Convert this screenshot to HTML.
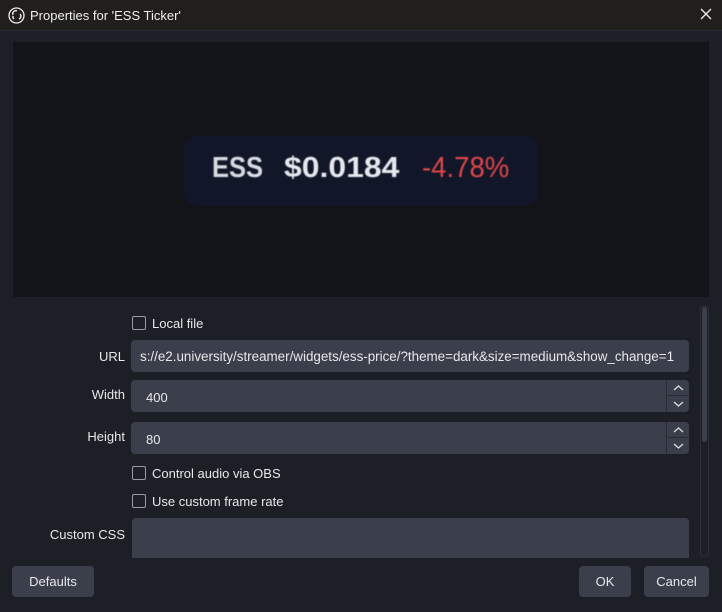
<!DOCTYPE html>
<html><head><style>
*{margin:0;padding:0;box-sizing:border-box}
body{width:722px;height:612px;background:#1d1f26;font-family:"Liberation Sans",sans-serif;color:#e8e8ea;position:relative;overflow:hidden;font-size:13px}
.a{position:absolute}
.title{left:0;top:0;width:722px;height:31px;background:#201f1c;border-bottom:1px solid #2a2b30}
.inp{background:#3b3e4b;border-radius:4px}
.lbl{text-align:right;width:125px;left:0}
.cb{width:14px;height:14px;border:1px solid #9a9ca4;border-radius:2px}
.btn{background:#3b3e4b;border-radius:4px;text-align:center;line-height:31px;height:31px;top:566px}
.sp{position:absolute;right:0;width:23px;height:16px;border-left:1px solid #2a2c35}
.t{position:absolute;top:152px;font-size:29px;font-weight:bold;white-space:nowrap;transform-origin:0 0;filter:blur(0.6px)}
</style></head><body>
<div class="a title">
<svg class="a" style="left:8px;top:7px" width="17" height="17" viewBox="0 0 17 17"><circle cx="8.5" cy="8.5" r="7.5" fill="none" stroke="#eee" stroke-width="1.3"/><path d="M5 8a3 3 0 0 1 4-4M12 7a3 3 0 0 1-1 5M6 12a3 3 0 0 1-1-3" stroke="#eee" stroke-width="1.4" fill="none"/></svg>
<div class="a" style="left:30px;top:8px;font-size:13px;color:#f0f0f0">Properties for 'ESS Ticker'</div>
<svg class="a" style="left:700px;top:8px" width="12" height="12" viewBox="0 0 12 12"><path d="M1 1L11 11M11 1L1 11" stroke="#eee" stroke-width="1.3"/></svg>
</div>
<div class="a" style="left:13px;top:42px;width:696px;height:255px;background:#131419"></div>
<div class="a" style="left:184px;top:136px;width:354px;height:70px;background:#111729;border-radius:14px"></div>
<div class="t" style="left:212px;color:#d8dbe2;transform:scaleX(0.88)">ESS</div>
<div class="t" style="left:284px;color:#e6e8ee;transform:scaleX(1.1)">$0.0184</div>
<div class="t" style="left:422px;color:#e0474a;font-weight:normal;transform:scaleX(0.95)">-4.78%</div>
<div class="a" style="left:700px;top:305px;width:9px;height:252px;border:1px solid #2c2e36;border-radius:4px"></div>
<div class="a" style="left:702px;top:307px;width:5px;height:135px;background:#3b3e4b;border-radius:3px"></div>

<div class="a cb" style="left:132px;top:316px"></div>
<div class="a" style="left:152px;top:316px">Local file</div>
<div class="a lbl" style="top:349px">URL</div>
<div class="a inp" style="left:131px;top:340px;width:558px;height:32px"><div class="a" style="left:9px;top:9px;white-space:nowrap;font-size:13.4px">s://e2.university/streamer/widgets/ess-price/?theme=dark&amp;size=medium&amp;show_change=1</div></div>
<div class="a lbl" style="top:387px">Width</div>
<div class="a inp" style="left:131px;top:380px;width:558px;height:32px"><div class="a" style="left:15px;top:10px">400</div>
<div class="sp" style="top:0;border-bottom:1px solid #2a2c35"><svg width="23" height="16"><path d="M7 10L11.5 6L16 10" stroke="#ddd" stroke-width="1.3" fill="none"/></svg></div>
<div class="sp" style="top:16px"><svg width="23" height="16"><path d="M7 6L11.5 10L16 6" stroke="#ddd" stroke-width="1.3" fill="none"/></svg></div></div>
<div class="a lbl" style="top:429px">Height</div>
<div class="a inp" style="left:131px;top:422px;width:558px;height:32px"><div class="a" style="left:15px;top:10px">80</div>
<div class="sp" style="top:0;border-bottom:1px solid #2a2c35"><svg width="23" height="16"><path d="M7 10L11.5 6L16 10" stroke="#ddd" stroke-width="1.3" fill="none"/></svg></div>
<div class="sp" style="top:16px"><svg width="23" height="16"><path d="M7 6L11.5 10L16 6" stroke="#ddd" stroke-width="1.3" fill="none"/></svg></div></div>
<div class="a cb" style="left:132px;top:466px"></div>
<div class="a" style="left:152px;top:466px">Control audio via OBS</div>
<div class="a cb" style="left:132px;top:494px"></div>
<div class="a" style="left:152px;top:494px">Use custom frame rate</div>
<div class="a lbl" style="top:527px">Custom CSS</div>
<div class="a inp" style="left:132px;top:518px;width:557px;height:40px;border-radius:4px 4px 0 0"></div>

<div class="a btn" style="left:12px;width:82px">Defaults</div>
<div class="a btn" style="left:579px;width:52px">OK</div>
<div class="a btn" style="left:644px;width:65px">Cancel</div>
</body></html>
